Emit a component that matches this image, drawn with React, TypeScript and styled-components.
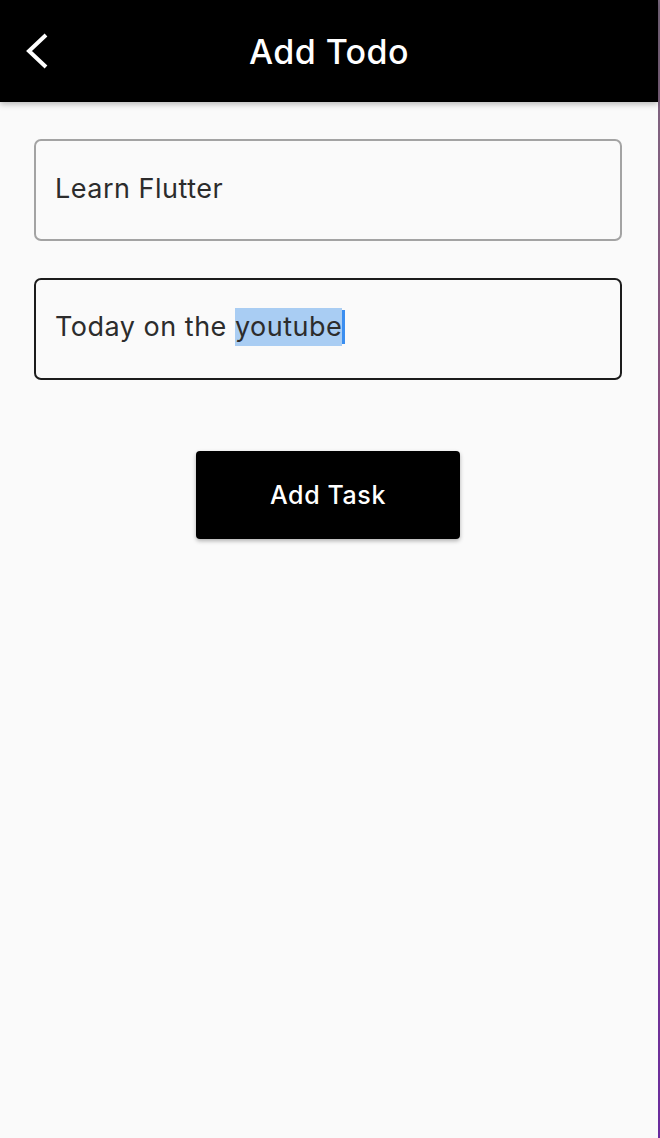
import styled, { createGlobalStyle } from "styled-components";

const GlobalStyle = createGlobalStyle`
  html, body {
    margin: 0;
    padding: 0;
    background: #fafafa;
    font-family: Inter, "Noto Sans", sans-serif;
  }
  * {
    box-sizing: border-box;
  }
`;

const Frame = styled.div`
  display: flex;
  height: 1138px;
  overflow: hidden;
`;

const Screen = styled.div`
  flex: 1;
  display: flex;
  flex-direction: column;
  background: #fafafa;
`;

const EdgeStrip = styled.div`
  width: 2px;
  background: linear-gradient(180deg, #7c6a80 0%, #8a4a7c 40%, #7a3a8c 70%, #6a2c9e 100%);
`;

const AppBar = styled.header`
  position: relative;
  z-index: 1;
  height: 102px;
  background: #000;
  display: flex;
  align-items: center;
  justify-content: center;
  box-shadow: 0 2px 6px rgba(0, 0, 0, 0.28);
`;

const BackButton = styled.button`
  position: absolute;
  left: 18px;
  top: 50%;
  transform: translateY(-50%);
  width: 40px;
  height: 48px;
  display: flex;
  align-items: center;
  justify-content: center;
  padding: 0;
  border: none;
  background: transparent;
  cursor: pointer;
`;

const Title = styled.h1`
  margin: 0;
  color: #fff;
  font-size: 34px;
  font-weight: 500;
  letter-spacing: 0.4px;
`;

const Body = styled.main`
  display: flex;
  flex-direction: column;
  padding: 37px 36px 0 34px;
  gap: 37px;
`;

const Field = styled.div<{ $focused?: boolean }>`
  height: 102px;
  border: 2px solid ${(p) => (p.$focused ? "#1c1c1c" : "#a3a3a3")};
  border-radius: 7px;
  display: flex;
  align-items: center;
  padding: 0 19px 4px;
  font-size: 27px;
  color: #2c2c2c;
  letter-spacing: 0.5px;
`;

const Selected = styled.span`
  background: #a9cdf3;
  padding: 2px 0 3px;
`;

const Caret = styled.span`
  display: inline-block;
  width: 3px;
  height: 34px;
  background: #3b8ef0;
  vertical-align: middle;
  margin-top: -4px;
`;

const ButtonRow = styled.div`
  display: flex;
  justify-content: center;
  padding-top: 34px;
`;

const SubmitButton = styled.button`
  width: 264px;
  height: 88px;
  border: none;
  border-radius: 4px;
  background: #000;
  color: #fff;
  font-family: Inter, "Noto Sans", sans-serif;
  font-size: 25px;
  font-weight: 500;
  letter-spacing: 0.6px;
  box-shadow: 0 2px 4px rgba(0, 0, 0, 0.3);
  cursor: pointer;
`;

export default function App() {
  return (
    <Frame>
      <GlobalStyle />
      <Screen>
        <AppBar>
          <BackButton aria-label="Back">
            <svg width="24" height="36" viewBox="0 0 24 36">
              <path d="M20 2 L3 18 L20 34" fill="none" stroke="#fff" strokeWidth="4" />
            </svg>
          </BackButton>
          <Title>Add Todo</Title>
        </AppBar>
        <Body>
          <Field>Learn Flutter</Field>
          <Field $focused>
            <span>
              Today on the <Selected>youtube</Selected>
              <Caret />
            </span>
          </Field>
          <ButtonRow>
            <SubmitButton>Add Task</SubmitButton>
          </ButtonRow>
        </Body>
      </Screen>
      <EdgeStrip />
    </Frame>
  );
}
